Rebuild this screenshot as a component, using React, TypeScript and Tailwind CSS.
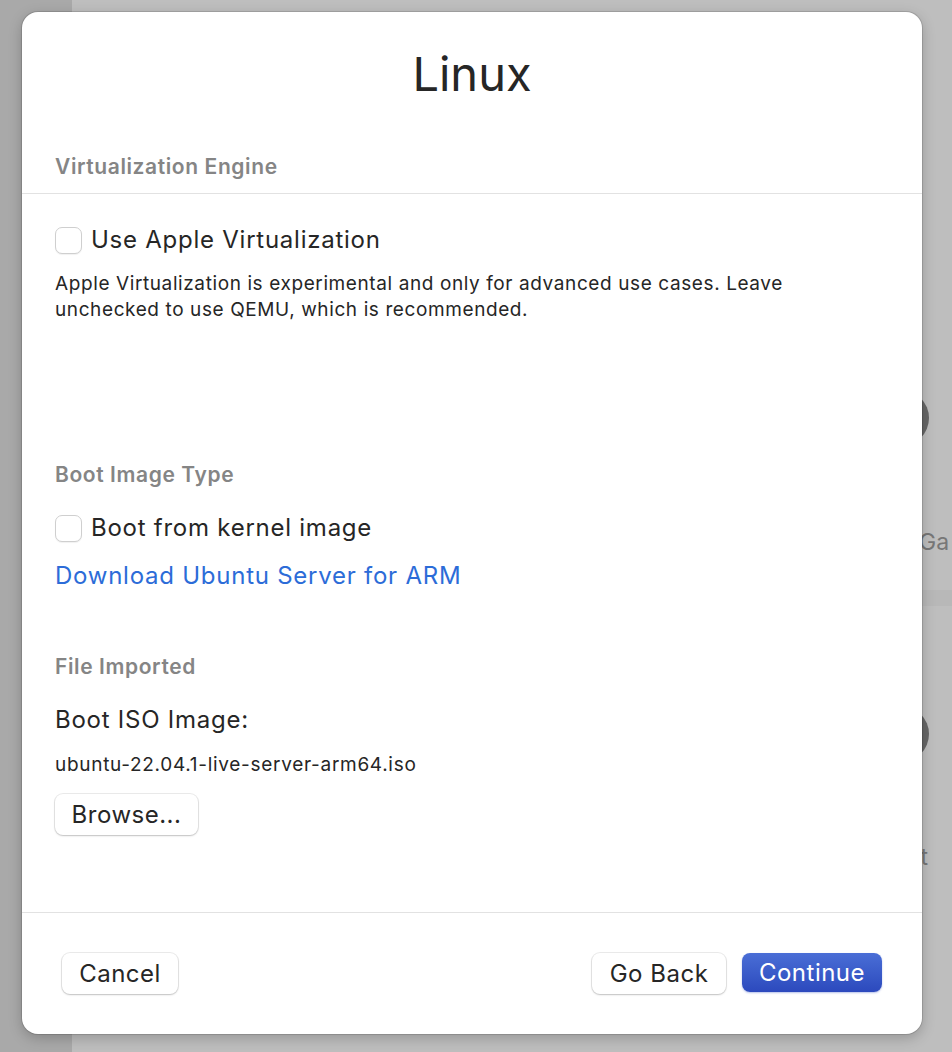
import React from 'react';

const Checkbox: React.FC<{ label: string }> = ({ label }) => (
  <label className="flex items-center gap-[9px] h-[30px]">
    <span className="w-[27px] h-[27px] rounded-[7px] border border-[#cfcfcf] bg-white shadow-[0_1px_1px_rgba(0,0,0,0.06)]" />
    <span className="text-[24px] tracking-[0.75px] text-[#262626]">{label}</span>
  </label>
);

const SectionHeader: React.FC<{ children: React.ReactNode }> = ({ children }) => (
  <div className="text-[21px] leading-[26px] tracking-[0.6px] font-semibold text-[#858585]">{children}</div>
);

const MacButton: React.FC<{ children: React.ReactNode; className?: string }> = ({ children, className = '' }) => (
  <button
    className={`h-[41px] rounded-[8px] bg-white text-[24px] tracking-[0.5px] text-[#262626] shadow-[0_0_0_1px_rgba(0,0,0,0.08),0_1px_2px_rgba(0,0,0,0.18)] ${className}`}
  >
    {children}
  </button>
);

export default function App() {
  return (
    <div className="relative w-[952px] h-[1052px] overflow-hidden flex bg-[#bdbdbd]" style={{ fontFamily: 'Inter, "Noto Sans", sans-serif' }}>
      {/* window behind the sheet */}
      <div className="w-[72px] h-full bg-[#a9a9a9]" />
      <div className="flex-1 h-full bg-[#bebebe]" />

      <div className="absolute left-[873px] top-[390px] w-[56px] h-[56px] rounded-full bg-[#666666]" />
      <div className="absolute left-[873px] top-[706px] w-[56px] h-[56px] rounded-full bg-[#666666]" />
      <div className="absolute left-[919px] top-[525px] text-[23px] text-[#777777]">Ga</div>
      <div className="absolute left-[882px] top-[840px] text-[23px] text-[#777777]">Test</div>
      <div className="absolute left-[922px] top-[590px] w-[30px] h-[16px] bg-[#b8b8b8]" />

      {/* sheet */}
      <div className="absolute left-[22px] top-[12px] w-[900px] h-[1022px] flex flex-col rounded-[16px] bg-white shadow-[0_0_0_1px_rgba(0,0,0,0.12),0_4px_14px_rgba(0,0,0,0.22)]">
        <div className="flex-1 flex flex-col pt-[32px]">
          <h1 className="text-center text-[47px] leading-[60px] text-[#262626]">Linux</h1>

          <div className="mt-[50px] px-[33px]">
            <SectionHeader>Virtualization Engine</SectionHeader>
          </div>
          <div className="mt-[13px] h-px bg-[#e2e2e2]" />

          <div className="px-[33px] flex flex-col">
            <div className="mt-[31px]">
              <Checkbox label="Use Apple Virtualization" />
            </div>
            <p className="mt-[16px] text-[19px] leading-[26px] tracking-[0.6px] text-[#262626]">
              Apple Virtualization is experimental and only for advanced use cases. Leave
              <br />
              unchecked to use QEMU, which is recommended.
            </p>

            <div className="mt-[139px]">
              <SectionHeader>Boot Image Type</SectionHeader>
            </div>
            <div className="mt-[25px]">
              <Checkbox label="Boot from kernel image" />
            </div>
            <a className="mt-[18px] text-[24px] leading-[30px] tracking-[0.75px] text-[#2c6cd8] self-start">
              Download Ubuntu Server for ARM
            </a>

            <div className="mt-[63px]">
              <SectionHeader>File Imported</SectionHeader>
            </div>
            <div className="mt-[25px] text-[24px] leading-[30px] tracking-[0.75px] text-[#262626]">Boot ISO Image:</div>
            <div className="mt-[17px] text-[19px] leading-[26px] tracking-[0.7px] text-[#262626]">ubuntu-22.04.1-live-server-arm64.iso</div>
            <div className="mt-[16px]">
              <MacButton className="w-[143px] h-[39px]">Browse...</MacButton>
            </div>
          </div>
        </div>

        <div className="border-t border-[#e2e2e2] flex items-center justify-between px-[40px] pt-[40px] pb-[40px]">
          <MacButton className="w-[116px]">Cancel</MacButton>
          <div className="flex gap-[16px]">
            <MacButton className="w-[134px]">Go Back</MacButton>
            <button className="w-[140px] h-[39px] rounded-[8px] text-[24px] tracking-[0.5px] text-white bg-gradient-to-b from-[#4a6ed6] to-[#2c49bd] shadow-[0_1px_2px_rgba(43,74,192,0.35)]">
              Continue
            </button>
          </div>
        </div>
      </div>
    </div>
  );
}
